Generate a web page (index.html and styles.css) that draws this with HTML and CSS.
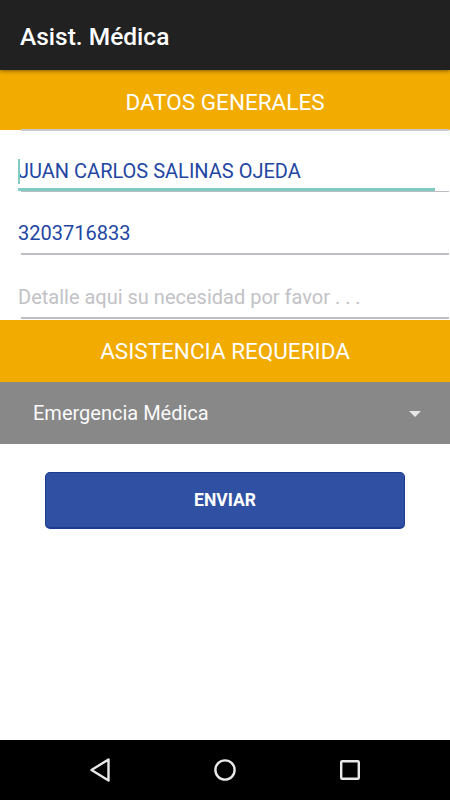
FILE: index.html
```html
<!DOCTYPE html>
<html lang="es">
<head>
  <meta charset="UTF-8">
  <meta name="viewport" content="width=device-width, initial-scale=1.0">
  <title>Asist. Médica</title>
  <link rel="stylesheet" href="styles.css">
</head>
<body>
  <div class="screen">
    <header class="toolbar">Asist. Médica</header>

    <div class="section-title first">DATOS GENERALES</div>

    <div class="field field-active">
      <span class="cursor"></span>
      <span class="value">JUAN CARLOS SALINAS OJEDA</span>
    </div>
    <div class="field">
      <span class="value">3203716833</span>
    </div>
    <div class="field">
      <span class="placeholder">Detalle aqui su necesidad por favor . . .</span>
    </div>

    <div class="section-title">ASISTENCIA REQUERIDA</div>

    <div class="spinner">
      <span>Emergencia Médica</span>
      <span class="caret"></span>
    </div>

    <div class="actions">
      <button class="send">ENVIAR</button>
    </div>

    <div class="spacer"></div>

    <nav class="navbar">
      <svg width="22" height="26" viewBox="0 0 22 26">
        <path d="M19.5 2.5 L2.5 13 L19.5 23.5 Z" fill="none" stroke="#e8e8e8" stroke-width="2.4" stroke-linejoin="round"/>
      </svg>
      <svg width="24" height="24" viewBox="0 0 24 24">
        <circle cx="12" cy="12" r="9.6" fill="none" stroke="#e8e8e8" stroke-width="2.4"/>
      </svg>
      <svg width="22" height="22" viewBox="0 0 22 22">
        <rect x="2.2" y="2.2" width="17.6" height="17.6" rx="1" fill="none" stroke="#e8e8e8" stroke-width="2.4"/>
      </svg>
    </nav>
  </div>
</body>
</html>
```

FILE: styles.css
```css
body {
  margin: 0;
  font-family: Roboto, 'Liberation Sans', sans-serif;
  background-color: #fff;
}

.screen {
  width: 450px;
  height: 800px;
  display: flex;
  flex-direction: column;
  overflow: hidden;
}

.toolbar {
  height: 70px;
  flex-shrink: 0;
  box-sizing: border-box;
  background-color: #212121;
  color: #fff;
  font-size: 24.5px;
  font-weight: 500;
  padding-left: 20px;
  padding-top: 2px;
  display: flex;
  align-items: center;
  position: relative;
  z-index: 2;
  box-shadow: 0 1px 4px rgba(0, 0, 0, 0.45);
}

.section-title {
  height: 62px;
  flex-shrink: 0;
  background-color: #f2ab00;
  color: #fff;
  font-size: 22.5px;
  display: flex;
  align-items: center;
  justify-content: center;
}

.section-title.first {
  height: 60px;
  padding-top: 4px;
  box-sizing: border-box;
}

.field {
  height: 64px;
  flex-shrink: 0;
  position: relative;
  box-sizing: border-box;
  padding-left: 18px;
  padding-top: 29px;
  font-size: 20px;
  line-height: 24px;
}

.field::after {
  content: "";
  position: absolute;
  left: 21px;
  right: 1px;
  bottom: 1px;
  height: 2px;
  background-color: #bdbdc4;
}

.field-active {
  height: 62px;
  padding-top: 29px;
}

.field-active::before {
  content: "";
  position: absolute;
  left: 21px;
  right: 1px;
  top: -1px;
  height: 2px;
  background-color: #c8c8cc;
}

.field-active::after {
  bottom: 0;
  height: 1.5px;
}

.field-active .value {
  display: block;
  width: 417px;
  height: 29px;
  border-bottom: 3px solid #80cbc4;
}

.cursor {
  position: absolute;
  left: 18px;
  top: 29px;
  width: 2px;
  height: 25px;
  background-color: #80cbc4;
}

.value {
  color: #2346a3;
}

.placeholder {
  color: #c2c2c6;
}

.spinner {
  height: 62px;
  flex-shrink: 0;
  background-color: #888888;
  color: #fafafa;
  font-size: 20px;
  padding-left: 33px;
  padding-right: 29px;
  display: flex;
  align-items: center;
  justify-content: space-between;
}

.caret {
  width: 0;
  height: 0;
  border-left: 6px solid transparent;
  border-right: 6px solid transparent;
  border-top: 6px solid #e6e6e6;
  margin-top: 1px;
}

.actions {
  padding-top: 28px;
  padding-left: 45px;
}

.send {
  width: 360px;
  height: 57px;
  background-color: #3051a3;
  color: #fff;
  border: 1px solid #1e3b94;
  border-bottom-width: 2px;
  border-radius: 5px;
  font-family: Roboto, 'Liberation Sans', sans-serif;
  font-size: 17.5px;
  font-weight: 700;
}

.spacer {
  flex: 1;
}

.navbar {
  height: 60px;
  flex-shrink: 0;
  background-color: #000;
  display: flex;
  align-items: center;
  justify-content: space-between;
  padding: 0 89px;
}
```
